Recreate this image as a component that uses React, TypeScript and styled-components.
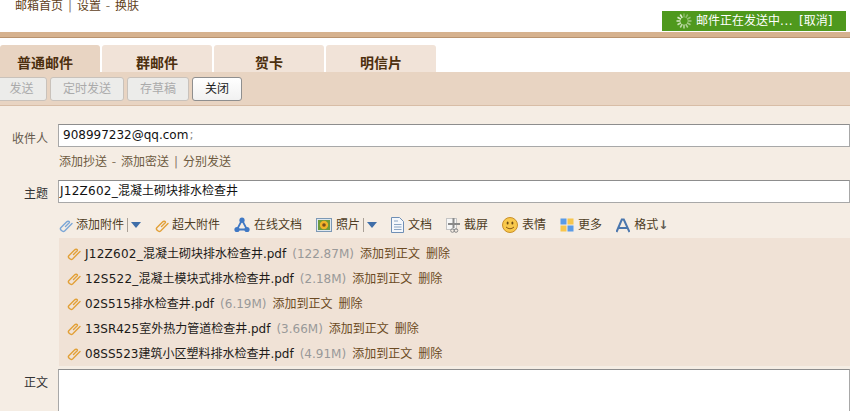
import React from "react";
import styled, { createGlobalStyle } from "styled-components";

const Global = createGlobalStyle`
  html, body { margin: 0; padding: 0; background: #fff; overflow: hidden; }
  body { font: 12px/18px "DejaVu Sans", "Noto Sans CJK SC", sans-serif; color: #222; }
  * { box-sizing: border-box; }
`;

const Page = styled.div`
  width: 850px; height: 411px; overflow: hidden; background: #f5ede4;
`;
const Header = styled.header`
  height: 38px; background: #fff; border-bottom: 6px solid #d6b28f; position: relative;
  &::after { content: ""; position: absolute; left: 0; right: 0; bottom: -6px; height: 1px; background: #b9936f; }
`;
const TopLinks = styled.div`
  padding-left: 15px; position: absolute; top: -3px; color: #5f3f1a; height: 18px; display: flex;
`;
const Sep = styled.span`width: 14px; text-align: center; color: #8a7a66;`;
const SendingBar = styled.div`
  position: absolute; right: 4px; top: 11px; width: 184px; height: 20px; background: #4f991d; color: #fff;
  display: flex; align-items: center; padding-left: 14px; gap: 4px; white-space: nowrap;
`;
const Dots = styled.span`letter-spacing: 0.6px; margin-right: 2px;`;
const TabStrip = styled.nav`
  background: #fff; height: 34px; padding-top: 7px; display: flex; gap: 2px;
`;
const Tab = styled.div<{ $active?: boolean; $w: number }>`
  width: ${p => p.$w}px; height: 27px; border-radius: 3px 3px 0 0;
  background: ${p => (p.$active ? "#e8d4c2" : "#f1e3d8")};
  color: #4c2f0e; font-weight: 700; display: flex; align-items: center; justify-content: center;
  font-size: 14px; padding: 8px ${p => (p.$active ? 10 : 0)}px 0 0;
`;
const Toolbar = styled.div`
  height: 34px; background: #e8d4c2; border-bottom: 1px solid #d8bda6; display: flex; gap: 3px; padding: 5px 0 0;
`;
const Btn = styled.button<{ $w: number; $on?: boolean }>`
  width: ${p => p.$w}px; height: 24px; font: inherit; padding: 0; border-radius: 3px;
  border: 1px solid ${p => (p.$on ? "#8f8f8f" : "#c9c2bb")};
  background: ${p => (p.$on ? "linear-gradient(#fff,#f1f1f1)" : "#ececea")};
  color: ${p => (p.$on ? "#222" : "#aaa")};
  &:first-child { margin-left: -4px; }
`;
const Form = styled.main`
  padding-top: 18px;
`;
const Row = styled.div<{ $mt?: number }>`
  display: flex; margin-top: ${p => p.$mt ?? 0}px; align-items: flex-start;
`;
const Label = styled.label<{ $strong?: boolean; $pt?: number }>`
  width: 48px; flex: none; margin-right: 10px; text-align: right; padding-top: ${p => p.$pt ?? 6}px;
  color: ${p => (p.$strong ? "#333" : "#665a4c")};
`;
const Input = styled.div<{ $h?: number; $pl?: number }>`
  flex: 1; height: ${p => p.$h ?? 23}px; background: #fff; border: 1px solid #a8a8a8; border-top-color: #8d8d8d;
  padding: 1px 0 0 ${p => p.$pl ?? 4}px; color: #111; white-space: nowrap;
`;
const Semi = styled.span`color: #888; margin-left: 1px;`;
const AddLinks = styled.div`
  margin: 5px 0 0 59px; color: #6d5a3f; display: flex; height: 18px; align-items: center;
`;
const AttachBar = styled.div`
  margin: 11px 0 0 59px; height: 22px; display: flex; align-items: center; color: #4f3d25; white-space: nowrap;
`;
const ToolItem = styled.span<{ $ml?: number }>`
  display: inline-flex; align-items: center; gap: 4px; margin-left: ${p => p.$ml ?? 0}px;
`;
const Drop = styled.span`
  width: 0; height: 0; border: 5px solid transparent; border-top: 6px solid #3f6ea8; border-bottom: 0; margin-left: -1px;
`;
const VLine = styled.span`width: 1px; height: 14px; background: #a9a096; margin-left: -1px;`;
const Arrow = styled.span`font-weight: 700; color: #5f5a52;`;
const FormatLabel = styled.span`display: inline-flex; width: 30px; overflow: visible;`;
const AttachList = styled.div`
  margin: 2px 0 0 59px; height: 128px; background: #f0e2d6; padding: 3px 0 0 8px;
`;
const File = styled.div`
  height: 25px; display: flex; align-items: center; white-space: nowrap;
`;
const FileName = styled.span`color: #1c1a18; margin-left: 5px;`;
const Prefix = styled.span`letter-spacing: 0.25px;`;
const Size = styled.span`color: #999; margin-left: 6px;`;
const Act = styled.span`color: #6b4a23; margin-left: 6px;`;
const ClipSvg = styled.svg`margin-right: -1px; flex: none;`;

const Clip: React.FC<{ c?: string }> = ({ c = "#e2a037" }) => (
  <ClipSvg width="14" height="15" viewBox="0 0 14 15" fill="none">
    <path
      d="M6.5 8.5 L10 5 C11.5 3.5 9 2.5 7.5 4 L1.8 9.7 C.3 11.5 3.8 14.5 5.6 12.9 L13 5.5"
      stroke={c}
      strokeWidth="1.4"
      strokeLinecap="round"
    />
  </ClipSvg>
);
const Spinner = () => (
  <svg width="16" height="16" viewBox="0 0 16 16">
    {Array.from({ length: 12 }).map((_, i) => (
      <rect key={i} x="7.2" y="0.5" width="1.6" height="4" fill="#e8f4dc" opacity={0.35 + (i / 12) * 0.65} transform={`rotate(${i * 30} 8 8)`} />
    ))}
  </svg>
);
const Share = () => (
  <svg width="16" height="16" viewBox="0 0 16 16" fill="none">
    <path d="M8 3 L3 12.5 H13 Z" stroke="#3f78c4" strokeWidth="1.8" />
    <circle cx="8" cy="3.2" r="2.6" fill="#3f78c4" /><circle cx="3" cy="12.5" r="2.6" fill="#3f78c4" /><circle cx="13" cy="12.5" r="2.6" fill="#3f78c4" />
  </svg>
);
const Photo = () => (
  <svg width="16" height="16" viewBox="0 0 16 16">
    <rect x=".5" y="1.5" width="15" height="13" fill="#dfe8f0" stroke="#7d99b5" />
    <rect x="2" y="3" width="12" height="10" fill="#6e9a3a" />
    <circle cx="8" cy="8" r="4.2" fill="#f0b429" /><circle cx="8" cy="8" r="1.8" fill="#7a4d1a" />
  </svg>
);
const Doc = () => (
  <svg width="13" height="16" viewBox="0 0 13 16" fill="none">
    <path d="M.5 .5 H8.5 L12.5 4.5 V15.5 H.5 Z" fill="#f4f7fb" stroke="#6f8fb5" />
    <path d="M3 4 H7 M3 7.5 H10.5 M3 10 H10.5 M3 12.5 H10.5" stroke="#8aa5c4" />
  </svg>
);
const Scissors = () => (
  <svg width="14" height="16" viewBox="0 0 14 16" fill="none">
    <rect x=".5" y="1.5" width="10" height="11" fill="#f7f7f7" stroke="#c4c4c4" />
    <path d="M7.5 1 V11 M2 7 H14" stroke="#8a8a8a" strokeWidth="2" />
    <circle cx="6.5" cy="13.5" r="1.8" stroke="#8a8a8a" /><circle cx="10" cy="13.5" r="1.8" stroke="#8a8a8a" />
  </svg>
);
const Smile = () => (
  <svg width="16" height="16" viewBox="0 0 16 16">
    <circle cx="8" cy="8" r="7.5" fill="#f8c84c" stroke="#c98f28" />
    <ellipse cx="5.6" cy="6" rx="1" ry="1.5" fill="#6b4a14" /><ellipse cx="10.4" cy="6" rx="1" ry="1.5" fill="#6b4a14" />
    <path d="M4 10 Q8 13.5 12 10" stroke="#8a5a16" fill="none" />
  </svg>
);
const Grid4 = () => (
  <svg width="14" height="14" viewBox="0 0 14 14">
    <rect width="6" height="6" x=".5" y=".5" fill="#5b9be6" /><rect width="6" height="6" x="7.5" y=".5" fill="#f7c64d" />
    <rect width="6" height="6" x=".5" y="7.5" fill="#f7c64d" /><rect width="6" height="6" x="7.5" y="7.5" fill="#5b9be6" />
  </svg>
);
const LetterA = () => (
  <svg width="14" height="15" viewBox="0 0 14 15" fill="none">
    <path d="M.5 14 L5.8 1.5 H7.8 L13.5 14 M3 10 H11" stroke="#4a76ad" strokeWidth="2" />
  </svg>
);

const Name: React.FC<{ text: string }> = ({ text }) => {
  const i = text.indexOf("_");
  if (i < 0) return <>{text}</>;
  return <><Prefix>{text.slice(0, i + 1)}</Prefix>{text.slice(i + 1)}</>;
};

const files = [
  ["J12Z602_混凝土砌块排水检查井.pdf", "(122.87M)"],
  ["12S522_混凝土模块式排水检查井.pdf", "(2.18M)"],
  ["02S515排水检查井.pdf", "(6.19M)"],
  ["13SR425室外热力管道检查井.pdf", "(3.66M)"],
  ["08SS523建筑小区塑料排水检查井.pdf", "(4.91M)"],
];

export default function App() {
  return (
    <Page>
      <Global />
      <Header>
        <TopLinks><span>邮箱首页</span><Sep>|</Sep><span>设置</span><Sep>-</Sep><span>换肤</span></TopLinks>
        <SendingBar><Spinner /><span>邮件正在发送中<Dots>...</Dots> [取消]</span></SendingBar>
      </Header>
      <TabStrip>
        <Tab $active $w={100}>普通邮件</Tab>
        <Tab $w={110}>群邮件</Tab>
        <Tab $w={110}>贺卡</Tab>
        <Tab $w={110}>明信片</Tab>
      </TabStrip>
      <Toolbar>
        <Btn $w={51}>发送</Btn>
        <Btn $w={74}>定时发送</Btn>
        <Btn $w={62}>存草稿</Btn>
        <Btn $w={50} $on>关闭</Btn>
      </Toolbar>
      <Form>
        <Row>
          <Label>收件人</Label>
          <Input>908997232@qq.com<Semi>;</Semi></Input>
        </Row>
        <AddLinks><span>添加抄送</span><Sep>-</Sep><span>添加密送</span><Sep>|</Sep><span>分别发送</span></AddLinks>
        <Row $mt={9}>
          <Label $strong $pt={5}>主题</Label>
          <Input $pl={1}><Name text="J12Z602_混凝土砌块排水检查井" /></Input>
        </Row>
        <AttachBar>
          <ToolItem><Clip c="#7ba6d6" />添加附件<VLine /><Drop /></ToolItem>
          <ToolItem $ml={14}><Clip />超大附件</ToolItem>
          <ToolItem $ml={14}><Share />在线文档</ToolItem>
          <ToolItem $ml={14}><Photo />照片<VLine /><Drop /></ToolItem>
          <ToolItem $ml={14}><Doc />文档</ToolItem>
          <ToolItem $ml={14}><Scissors />截屏</ToolItem>
          <ToolItem $ml={14}><Smile />表情</ToolItem>
          <ToolItem $ml={14}><Grid4 />更多</ToolItem>
          <ToolItem $ml={14}><LetterA /><FormatLabel><span>格式</span><Arrow>↓</Arrow></FormatLabel></ToolItem>
        </AttachBar>
        <AttachList>
          {files.map(([n, s]) => (
            <File key={n}>
              <Clip /><FileName><Name text={n} /></FileName><Size>{s}</Size><Act>添加到正文</Act><Act>删除</Act>
            </File>
          ))}
        </AttachList>
        <Row $mt={3}>
          <Label $strong $pt={5}>正文</Label>
          <Input $h={60} />
        </Row>
      </Form>
    </Page>
  );
}
